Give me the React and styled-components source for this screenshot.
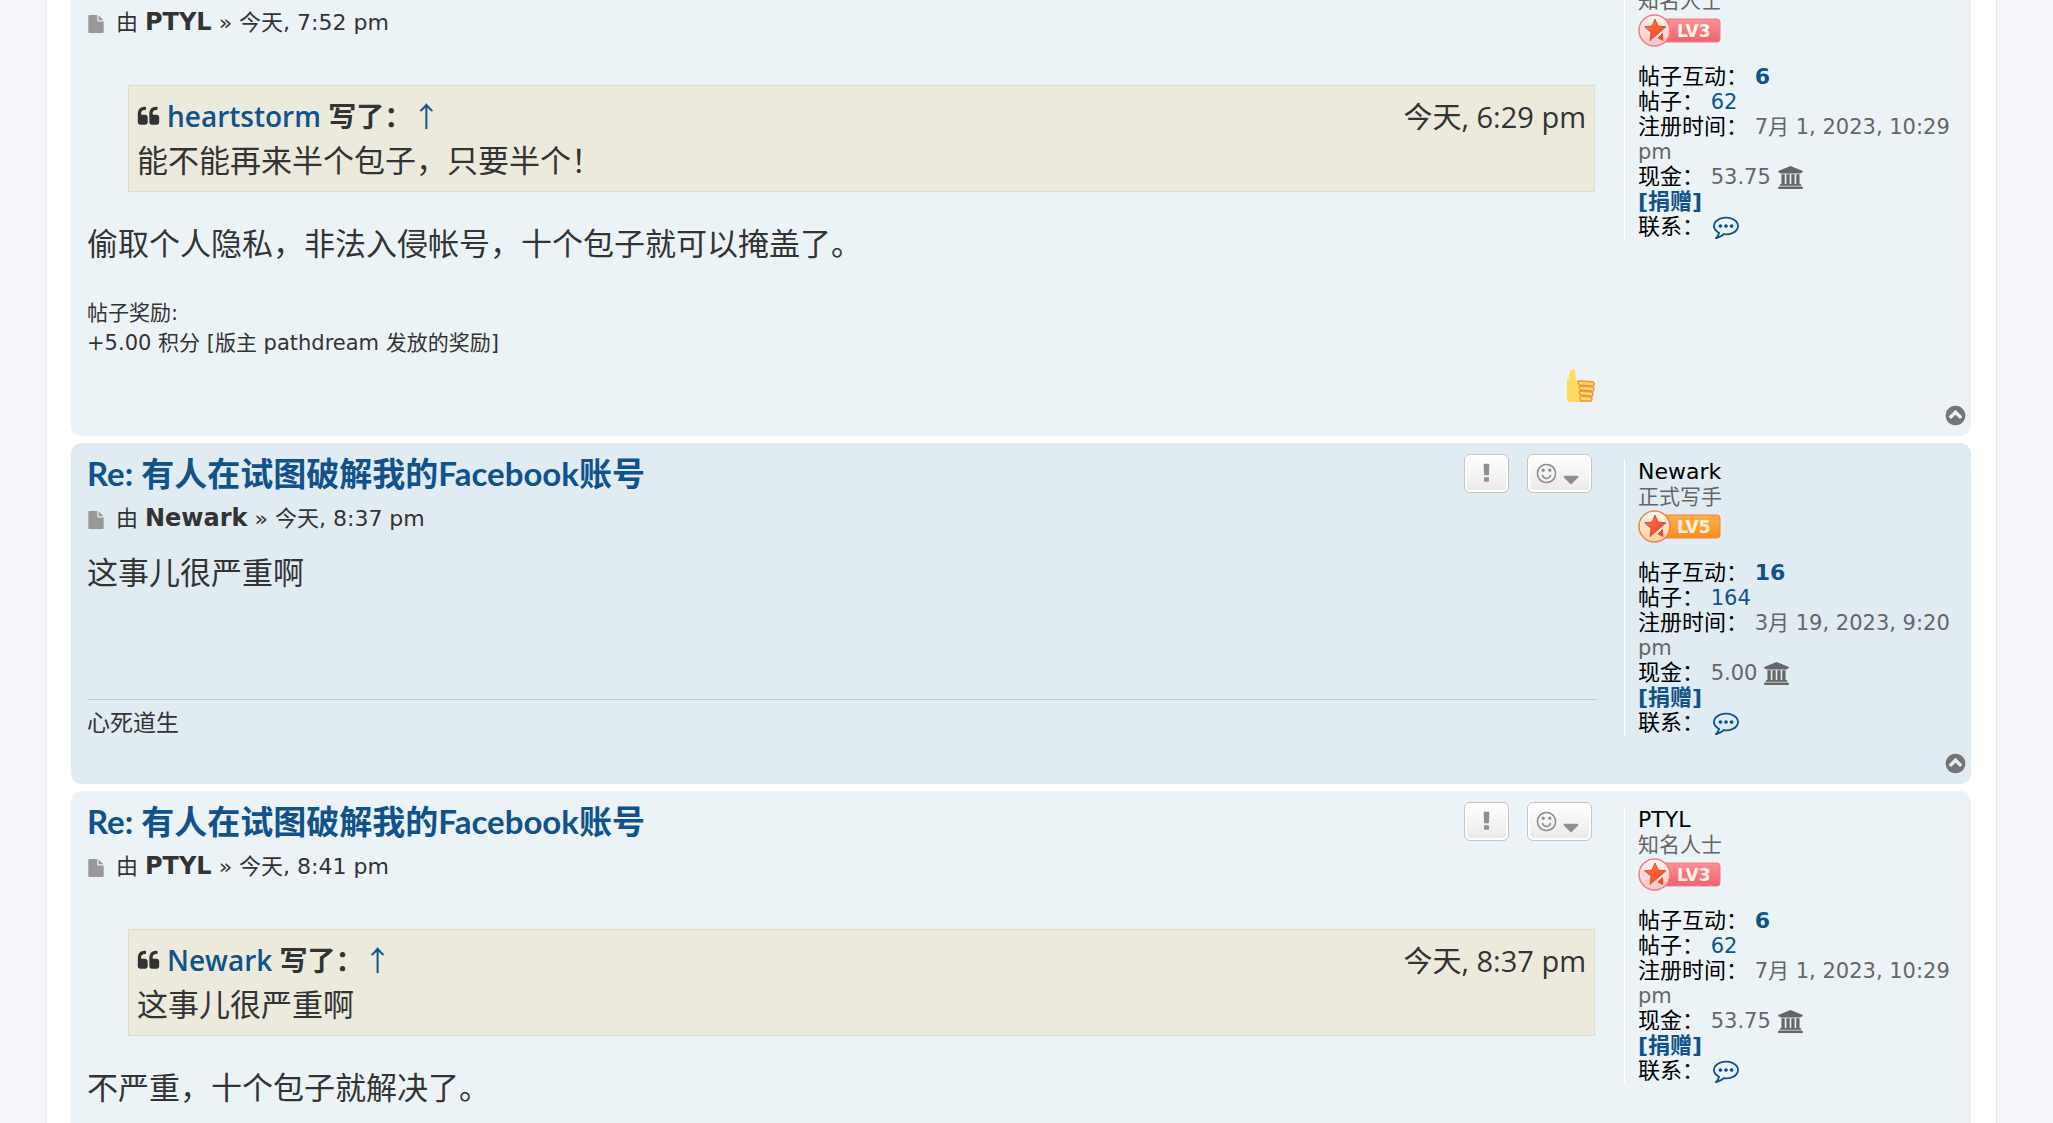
import React from "react";
import styled, { createGlobalStyle } from "styled-components";

const posts = [
	{
		id: 1,
		author: "PTYL",
		time: "今天, 7:52 pm",
		quote: { author: "heartstorm", time: "今天, 6:29 pm", text: "能不能再来半个包子，只要半个！" },
		text: "偷取个人隐私，非法入侵帐号，十个包子就可以掩盖了。",
		reward: ["帖子奖励:", "+5.00 积分 [版主 pathdream 发放的奖励]"],
		liked: true,
	},
	{
		id: 2,
		author: "Newark",
		time: "今天, 8:37 pm",
		text: "这事儿很严重啊",
		signature: "心死道生",
	},
	{
		id: 3,
		author: "PTYL",
		time: "今天, 8:41 pm",
		quote: { author: "Newark", time: "今天, 8:37 pm", text: "这事儿很严重啊" },
		text: "不严重，十个包子就解决了。",
	},
];

const users = {
	PTYL: { rank: "知名人士", level: 3, likes: 6, posts: 62, joined: "7月 1, 2023, 10:29 pm", cash: "53.75" },
	Newark: { rank: "正式写手", level: 5, likes: 16, posts: 164, joined: "3月 19, 2023, 9:20 pm", cash: "5.00" },
};

const circle =
	"q0 209-103 385.5t-279.5 279.5-385.5 103-385.5-103-279.5-279.5-103-385.5 103-385.5 279.5-279.5 385.5-103 385.5 103 279.5 279.5 103 385.5z";
const dot = "q0 53-37.5 90.5t-90.5 37.5-90.5-37.5-37.5-90.5 37.5-90.5 90.5-37.5 90.5 37.5 37.5 90.5z";
const quoteMark =
	"v384q0 80-56 136t-136 56h-384q-80 0-136-56t-56-136v-704q0-104 40.5-198.5t109.5-163.5 163.5-109.5 198.5-40.5h64q26 0 45 19t19 45v128q0 26-19 45t-45 19h-64q-106 0-181 75t-75 181v32q0 40 28 68t68 28h224q80 0 136 56t56 136z";

const icons = {
	file: "M1152 512v-472q22 14 36 28l408 408q14 14 28 36h-472zm-128 32q0 40 28 68t68 28h544v1056q0 40-28 68t-68 28h-1344q-40 0-68-28t-28-68v-1600q0-40 28-68t68-28h800v544z",
	quote: `M832 960${quoteMark}M1728 960${quoteMark}`,
	exclamation:
		"M1088 1248v224q0 26-19 45t-45 19h-256q-26 0-45-19t-19-45v-224q0-26 19-45t45-19h256q26 0 45 19t19 45zm30-1056l-28 768q-1 26-20.5 45t-45.5 19h-256q-26 0-45.5-19t-20.5-45l-28-768q-1-26 17.5-45t44.5-19h320q26 0 44.5 19t17.5 45z",
	smile: `M1262 1075q-37 121-138 195t-228 74-228-74-138-195q-8-25 4-48.5t38-31.5q25-8 48.5 4t31.5 38q25 80 92.5 129.5t151.5 49.5 151.5-49.5 92.5-129.5q8-26 32-38t49-4 37 31.5 4 48.5zM768 640${dot}M1280 640${dot}M1536 896q0-130-51-248.5t-136.5-204-204-136.5-248.5-51-248.5 51-204 136.5-136.5 204-51 248.5 51 248.5 136.5 204 204 136.5 248.5 51 248.5-51 204-136.5 136.5-204 51-248.5zM1664 896${circle}`,
	caret: "M1408 1088q0 26-19 45l-448 448q-19 19-45 19t-45-19l-448-448q-19-19-19-45t19-45 45-19h896q26 0 45 19t19 45z",
	comment: `M640 896${dot}M1024 896${dot}M1408 896${dot}M896 384q-204 0-381.5 69.5t-282 187.5-104.5 255q0 112 71.5 213.5t201.5 175.5l87 50-27 96q-24 91-70 172 152-63 275-171l43-38 57 6q69 8 130 8 204 0 381.5-69.5t282-187.5 104.5-255-104.5-255-282-187.5-381.5-69.5zM1792 896q0 174-120 321.5t-326 233-450 85.5q-70 0-145-8-198 175-460 242-49 14-114 22h-5q-15 0-27-10.5t-16-27.5v-1q-3-4-.5-12t2-10 4.5-9.5l6-9 7-8.5 8-9q7-8 31-34.5t34.5-38 31-39.5 32.5-51 27-59 26-76q-157-89-247.5-220t-90.5-281q0-174 120-321.5t326-233 450-85.5 450 85.5 326 233 120 321.5z`,
	bank: "M896 0l960 384v128h-128q0 26-20.5 45t-48.5 19h-1526q-28 0-48.5-19t-20.5-45h-128v-128zm-704 640h256v768h128v-768h256v768h128v-768h256v768h128v-768h256v768h59q28 0 48.5 19t20.5 45v64h-1664v-64q0-26 20.5-45t48.5-19h59v-768zm1595 960q28 0 48.5 19t20.5 45v128h-1920v-128q0-26 20.5-45t48.5-19h1782z",
	up: `M1293 1139l102-102q19-19 19-45t-19-45l-454-454q-19-19-45-19t-45 19l-454 454q-19 19-19 45t19 45l102 102q19 19 45 19t45-19l307-307 307 307q19 19 45 19t45-19zM1664 896${circle}`,
};

const Icon = ({ name, size = 23, width = size, box = "0 0 1792 1792" }) => (
	<svg width={width} height={size} viewBox={box} fill="currentColor" aria-hidden="true">
		<path fillRule="evenodd" d={icons[name]} />
	</svg>
);

const LevelBadge = ({ level }) => {
	const orange = level === 5;
	const id = `level-${level}`;
	const edge = orange ? "#e8894a" : "#ee7f86";
	return (
		<BadgeSvg width="83" height="33" viewBox="0 0 83 33" role="img" aria-label={`LV${level}`}>
			<defs>
				<linearGradient id={`${id}-bar`} x1="0" y1="0" x2="0" y2="1">
					<stop offset="0" stopColor={orange ? "#ffb04a" : "#fb9298"} />
					<stop offset="1" stopColor={orange ? "#fb8c18" : "#f0616e"} />
				</linearGradient>
				<linearGradient id={`${id}-disc`} x1="0" y1="0" x2="0" y2="1">
					<stop offset="0" stopColor="#fff8f0" />
					<stop offset="1" stopColor={orange ? "#ffcf9c" : "#fbc3c6"} />
				</linearGradient>
				<linearGradient id={`${id}-star`} x1="0" y1="0" x2="1" y2="1">
					<stop offset="0" stopColor="#ff7b4a" />
					<stop offset="1" stopColor={orange ? "#e63a2e" : "#f0401c"} />
				</linearGradient>
			</defs>
			<rect x="17" y="5" width="65" height="23" rx="3" fill={`url(#${id}-bar)`} stroke={edge} />
			<circle cx="16.500" cy="16.500" r="15.500" fill={`url(#${id}-disc)`} stroke={edge} strokeWidth="1.500" />
			<path
				d="M17 5l3.200 7 7.800.8-6.200 5.400-9.800 8.300 1-8.300-6.500-5.400 7.500-.8zM24.500 19.500L25 26.500l-5-2.500z"
				fill={`url(#${id}-star)`}
				stroke="#d9402a"
				strokeWidth=".8"
				strokeLinejoin="round"
			/>
			<text x="39" y="23" fontFamily="'DejaVu Sans', sans-serif" fontSize="17" fontWeight="700" fill="#fff3e6">
				LV{level}
			</text>
		</BadgeSvg>
	);
};

const Thumb = () => (
	<svg width="28" height="33" viewBox="0 0 28 33" role="img" aria-label="赞">
		<path d="M3 2Q5-1 8 1l1 10 17 1q2 1 2 3l-3 16q-1 2-3 2H4q-4 0-4-4V14q0-4 2-6z" fill="#ffdb5e" />
		<path
			d="M12 12l14 1q2 2 0 4l-13-1q-3-2-1-4zM13 17l13 1q2 2 0 4l-12-1q-3-2-1-4zM13 22l12 1q2 2 0 4l-11-1q-3-2-1-4zM14 27l10 1q2 2 0 4H14q-2-3 0-5z"
			fill="#ffdb5e"
			stroke="#ee9547"
			strokeWidth="1.400"
		/>
	</svg>
);

const Profile = ({ name }) => {
	const user = users[name];

	return (
		<ProfileWrapper>
			<ProfileName>{name}</ProfileName>
			<Rank>{user.rank}</Rank>
			<LevelBadge level={user.level} />
			<Details>
				<Row>
					<Label>帖子互动：</Label> <BoldLink href="#likes">{user.likes}</BoldLink>
				</Row>
				<Row>
					<Label>帖子：</Label> <a href="#posts">{user.posts}</a>
				</Row>
				<Row>
					<Label>注册时间：</Label> {user.joined}
				</Row>
				<Row>
					<Label>现金：</Label> {user.cash} <Icon name="bank" width={25} box="-64 0 1920 1792" />
				</Row>
				<Row>
					<BoldLink href="#donate">[捐赠]</BoldLink>
				</Row>
				<Row>
					<Label>联系：</Label>{" "}
					<ContactLink href="#contact" aria-label="联系">
						<Icon name="comment" size={26} />
					</ContactLink>
				</Row>
			</Details>
		</ProfileWrapper>
	);
};

const Post = ({ post, shaded }) => (
	<PostCard $shaded={shaded}>
		<PostInner>
			<PostBody>
				<PostHead>
					<Title>
						<a href={`#p${post.id}`}>Re: 有人在试图破解我的Facebook账号</a>
					</Title>
					<Buttons>
						<ToolButton type="button" aria-label="举报">
							<Icon name="exclamation" />
						</ToolButton>
						<ToolButton type="button" aria-label="表情" $wide>
							<Icon name="smile" />
							<Icon name="caret" size={26} />
						</ToolButton>
					</Buttons>
				</PostHead>
				<Meta>
					<Icon name="file" size={18} />
					<span>
						由 <strong>{post.author}</strong> » {post.time}
					</span>
				</Meta>
				<Content>
					{post.quote && (
						<Quote>
							<Cite>
								<Icon name="quote" />
								<span>
									<a href="#user">{post.quote.author}</a> 写了：<Arrow href="#source">↑</Arrow>
								</span>
								<QuoteTime>{post.quote.time}</QuoteTime>
							</Cite>
							<p>{post.quote.text}</p>
						</Quote>
					)}
					<p>{post.text}</p>
				</Content>
				{post.reward && (
					<Reward>
						{post.reward.map((line) => (
							<p key={line}>{line}</p>
						))}
					</Reward>
				)}
				{post.signature ? (
					<Signature>{post.signature}</Signature>
				) : (
					<Reactions>{post.liked && <Thumb />}</Reactions>
				)}
			</PostBody>
			<Profile name={post.author} />
		</PostInner>
		<PostFooter>
			<TopLink href="#top" aria-label="页首">
				<Icon name="up" />
			</TopLink>
		</PostFooter>
	</PostCard>
);

const App = () => (
	<>
		<GlobalStyle />
		<Page>
			<Wrap>
				{posts.map((post, index) => (
					<Post key={post.id} post={post} shaded={index % 2 === 1} />
				))}
			</Wrap>
		</Page>
	</>
);

const GlobalStyle = createGlobalStyle`
	* {
		box-sizing: border-box;
		margin: 0;
	}

	body {
		background: #f5f7fa;
		color: #333;
		font-family: "DejaVu Sans", "Noto Sans CJK SC", sans-serif;
		font-size: 21px;
	}

	a {
		color: #105289;
		text-decoration: none;
	}

	svg {
		flex: none;
	}
`;

const Page = styled.div`
	height: 100vh;
	overflow: hidden;
	padding: 0 56px 0 45px;
`;

/* the list is scrolled part of the way into its first post */
const Wrap = styled.main`
	display: flex;
	flex-direction: column;
	gap: 7px;
	margin-top: -53px;
	padding: 0 25px;
	background: #fff;
	border: solid #e6e9ed;
	border-width: 0 1px;
`;

const PostCard = styled.article`
	padding: 0 0 9px 16px;
	border-radius: 10px;
	background: ${({ $shaded }) => ($shaded ? "#e1ebf2" : "#ecf3f7")};
`;

const PostInner = styled.div`
	display: flex;
`;

const PostBody = styled.div`
	flex: 1;
	min-width: 0;
	margin-right: 27px;
	padding-top: 11px;
`;

const PostHead = styled.header`
	display: flex;
	justify-content: space-between;
	height: 49px;
	padding-right: 5px;
`;

const Title = styled.h3`
	font-family: Lato, "Noto Sans CJK SC", sans-serif;
	font-size: 33px;
	font-weight: 700;
	line-height: 38px;
`;

const Buttons = styled.div`
	display: flex;
	gap: 18px;
`;

const ToolButton = styled.button`
	display: flex;
	align-items: center;
	justify-content: center;
	width: ${({ $wide }) => ($wide ? 65 : 45)}px;
	height: 39px;
	padding: 0;
	border: 1px solid #c7c3bf;
	border-radius: 6px;
	background: linear-gradient(#fff, #e9e9e9);
	box-shadow: inset 0 0 0 2px #fff;
	color: #8f8f8f;
`;

const Meta = styled.p`
	display: flex;
	align-items: center;
	gap: 11px;
	height: 30px;
	margin-bottom: 18px;
	font-size: 22px;
	line-height: 30px;

	strong {
		font-size: 24px;
	}

	svg {
		margin-top: 3px;
		color: #999;
	}
`;

const Content = styled.div`
	display: flow-root;
	min-height: 85px;
	font-family: "Open Sans", "Noto Sans CJK SC", sans-serif;
	font-size: 31px;
	line-height: 43px;
`;

const Quote = styled.blockquote`
	margin: 30px 2px 30px 41px;
	padding: 10px 8px 9px;
	border: 1px solid #dbdbce;
	background: #ebeadd;
`;

const Cite = styled.div`
	display: flex;
	align-items: center;
	gap: 7px;
	height: 41px;
	margin-bottom: 2px;
	font-size: 28px;
	font-weight: 600;
`;

const Arrow = styled.a`
	font-family: "Noto Sans CJK SC", sans-serif;
	font-weight: 400;
	line-height: 1;
`;

const QuoteTime = styled.span`
	margin-left: auto;
	font-size: 29px;
	font-weight: 400;
`;

const Reward = styled.div`
	margin-top: 33px;
	line-height: 30px;
`;

const Reactions = styled.div`
	display: flex;
	justify-content: flex-end;
	min-height: 33px;
	margin: 11px 2px 2px 0;
`;

const Signature = styled.div`
	margin-top: 63px;
	padding-top: 8px;
	border-top: 1px solid #ccc;
	font-size: 23px;
	line-height: 30px;
`;

const ProfileWrapper = styled.aside`
	align-self: flex-start;
	width: 347px;
	margin: 16px 0;
	padding: 0 10px 0 13px;
	border-left: 1px solid #fff;
	color: #666;
	line-height: 25px;
`;

const ProfileName = styled.div`
	height: 25px;
	color: #000;
	font-size: 22px;
`;

const Rank = styled.div`
	height: 26px;
	line-height: 26px;
`;

const BadgeSvg = styled.svg`
	display: block;
`;

const Details = styled.div`
	margin-top: 18px;
`;

const Row = styled.div`
	svg {
		display: inline-block;
		margin: -4px 0;
		vertical-align: -1px;
	}
`;

const Label = styled.span`
	color: #000;
	font-size: 22px;
	line-height: 1;
`;

const BoldLink = styled.a`
	font-size: 22px;
	font-weight: 700;
	line-height: 1;
`;

const ContactLink = styled.a`
	margin-left: 2px;
`;

const PostFooter = styled.footer`
	display: flex;
	justify-content: flex-end;
	height: 23px;
	padding-right: 4px;
`;

const TopLink = styled.a`
	height: 23px;
	color: #757575;
`;

export default App;
